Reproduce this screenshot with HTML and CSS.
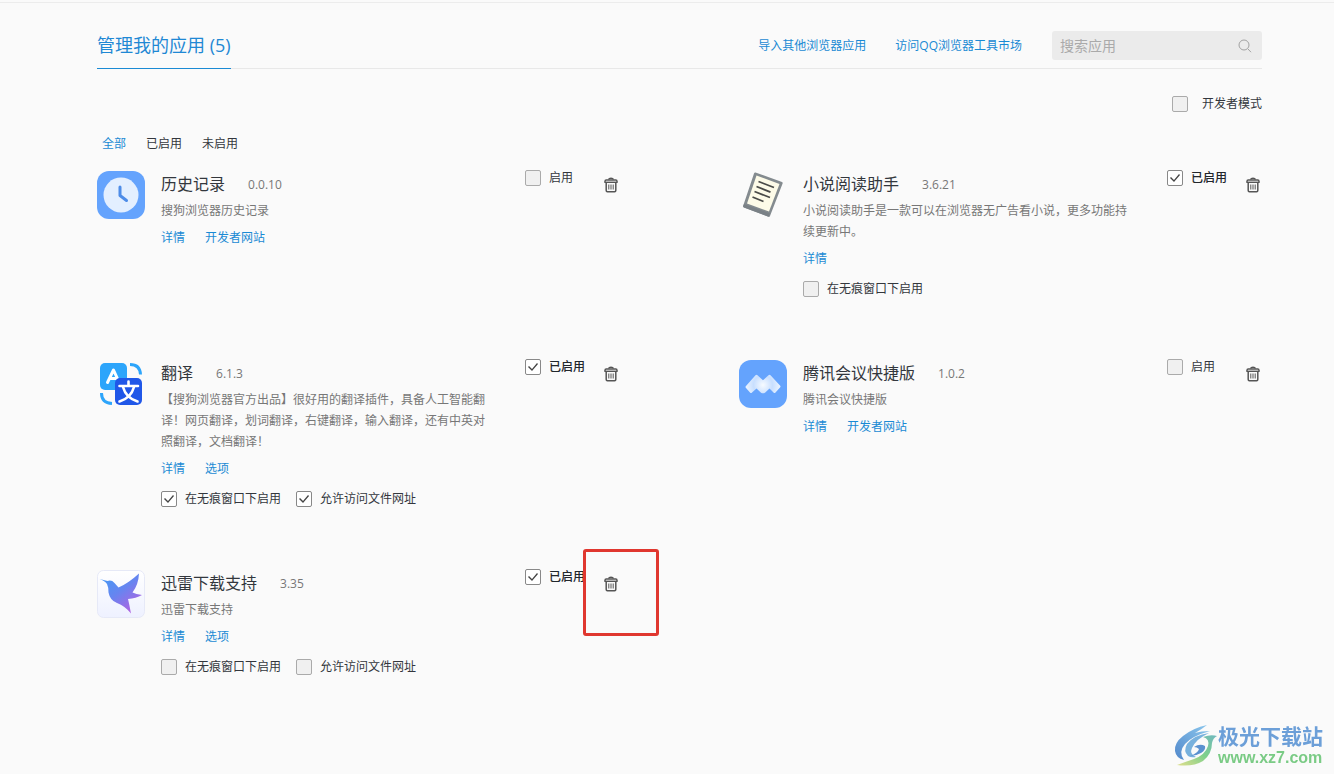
FILE: index.html
```html
<!DOCTYPE html>
<html lang="zh-CN">
<head>
<meta charset="utf-8">
<meta name="viewport" content="width=device-width, initial-scale=1">
<title>管理我的应用</title>
<link rel="stylesheet" href="styles.css">
</head>
<body>
<svg class="sprite" aria-hidden="true">
  <symbol id="trash" viewBox="0 0 14 16">
    <path d="M4.500 2.600Q5 1.300 7 1.300T9.500 2.600" fill="none" stroke="currentColor" stroke-width="1.400"/>
    <path d="M1 5.500V4.200Q1 3 2.200 3H11.800Q13 3 13 4.200V5.500" fill="none" stroke="currentColor" stroke-width="1.400"/>
    <path d="M.5 5.300H13.500" stroke="currentColor" stroke-width="1.400"/>
    <path d="M2.200 6V13.500Q2.200 14.700 3.400 14.700H10.600Q11.800 14.700 11.800 13.500V6" fill="none" stroke="currentColor" stroke-width="1.500"/>
    <path d="M4.800 7.500V12.500M7 7.500V12.500M9.200 7.500V12.500" stroke="currentColor" stroke-width="1"/>
  </symbol>
</svg>
<main class="page">
  <header class="header">
    <h1 class="title">管理我的应用 (5)</h1>
    <nav class="tools">
      <a href="#import">导入其他浏览器应用</a>
      <a href="#market">访问QQ浏览器工具市场</a>
    </nav>
    <form class="search">
      <input type="search" placeholder="搜索应用" aria-label="搜索应用">
      <button type="button" aria-label="搜索"><svg width="14" height="14" viewBox="0 0 14 14"><path d="M10 10L13 13.200" stroke="currentColor"/><circle cx="6" cy="6" r="5" fill="none" stroke="currentColor"/></svg></button>
    </form>
  </header>

  <label class="developer"><input type="checkbox">开发者模式</label>

  <nav class="filters">
    <a class="active" href="#all">全部</a>
    <a href="#enabled">已启用</a>
    <a href="#disabled">未启用</a>
  </nav>

  <section class="apps">
    <article class="app">
      <svg class="logo" viewBox="0 0 48 48">
        <rect width="48" height="48" rx="12" fill="#64a3fd"/>
        <circle cx="24" cy="24" r="17.500" fill="#e3efff"/>
        <path d="M23 16V24.500L29.500 29.500" fill="none" stroke="#4d8ce8" stroke-width="3" stroke-linecap="round" stroke-linejoin="round"/>
      </svg>
      <div class="info">
        <div class="heading"><h2>历史记录</h2><span>0.0.10</span></div>
        <p>搜狗浏览器历史记录</p>
        <div class="links"><a href="#detail">详情</a><a href="#site">开发者网站</a></div>
      </div>
      <div class="controls">
        <label><input type="checkbox">启用</label>
        <button class="remove" type="button" aria-label="删除"><svg><use href="#trash"/></svg></button>
      </div>
    </article>

    <article class="app">
      <svg class="logo" viewBox="0 0 48 48">
        <path d="M16.500 1.500L43 11Q44 11.500 43.600 12.500L31 45Q30.500 46.200 29.500 45.800L5 36.500Q3.800 36 4.200 34.800L15 2.500Q15.500 1.200 16.500 1.500Z" fill="#848b8f"/>
        <path d="M5 33L31 42.500L29.500 45.800L5 36.500Q4 36 4.200 35Z" fill="#7a8186"/>
        <path d="M17.500 4.500L40.500 13L30 40.500L8 32.500Z" fill="#fdfbe8"/>
        <path d="M19.500 10.500L35 16.500M17.500 15.500L31.500 21.200M15.500 20.500L31 26.500M13.500 26L24.500 30.500" stroke="#4a4b48" stroke-width="1.800"/>
      </svg>
      <div class="info">
        <div class="heading"><h2>小说阅读助手</h2><span>3.6.21</span></div>
        <p>小说阅读助手是一款可以在浏览器无广告看小说，更多功能持续更新中。</p>
        <div class="links"><a href="#detail">详情</a></div>
        <div class="options"><label><input type="checkbox">在无痕窗口下启用</label></div>
      </div>
      <div class="controls">
        <label class="on"><input type="checkbox" checked>已启用</label>
        <button class="remove" type="button" aria-label="删除"><svg><use href="#trash"/></svg></button>
      </div>
    </article>

    <article class="app">
      <svg class="logo" viewBox="0 0 48 48">
        <rect x="3" y="3" width="27" height="27" rx="5" fill="#2da5fb"/>
        <path d="M10.500 22.500L16.500 10L22 22M13 18.500H20" fill="none" stroke="#fff" stroke-width="3" stroke-linecap="round" stroke-linejoin="round"/>
        <path d="M33 4.500Q43 4.500 43.500 14.500M4.500 33Q4.500 43 15 43.500" fill="none" stroke="#2da5fb" stroke-width="3"/>
        <rect x="18" y="18" width="27" height="27" rx="5" fill="#2057e8"/>
        <path d="M31.500 21.500V25.500M22.500 26H41M26 27Q29 38 40.500 41.500M37 27Q34 38 22.500 41.500" fill="none" stroke="#fff" stroke-width="2.600" stroke-linecap="round"/>
      </svg>
      <div class="info">
        <div class="heading"><h2>翻译</h2><span>6.1.3</span></div>
        <p>【搜狗浏览器官方出品】很好用的翻译插件，具备人工智能翻译！网页翻译，划词翻译，右键翻译，输入翻译，还有中英对照翻译，文档翻译！</p>
        <div class="links"><a href="#detail">详情</a><a href="#options">选项</a></div>
        <div class="options">
          <label><input type="checkbox" checked>在无痕窗口下启用</label>
          <label><input type="checkbox" checked>允许访问文件网址</label>
        </div>
      </div>
      <div class="controls">
        <label class="on"><input type="checkbox" checked>已启用</label>
        <button class="remove" type="button" aria-label="删除"><svg><use href="#trash"/></svg></button>
      </div>
    </article>

    <article class="app">
      <svg class="logo" viewBox="0 0 48 48">
        <defs>
          <radialGradient id="meeting" gradientUnits="userSpaceOnUse" cx="24" cy="25" r="19"><stop stop-color="#f7fbff"/><stop offset=".5" stop-color="#c8dfff"/><stop offset="1" stop-color="#f2f8ff"/></radialGradient>
        </defs>
        <rect width="48" height="48" rx="12" fill="#64a3fd"/>
        <path d="M16.500 15.200Q17.500 14.200 18.500 15.200L24 20.200L29.500 15.200Q30.500 14.200 31.500 15.200L41 25.500Q42 26.500 41 27.500L36.500 32.500Q35.500 33.500 34.500 32.500L30.500 28.500L26 32.700Q24 34 22 32.700L17.500 28.500L13 32.500Q12 33.500 11 32.500L7 28Q6 27 7 26Z" fill="url(#meeting)"/>
      </svg>
      <div class="info">
        <div class="heading"><h2>腾讯会议快捷版</h2><span>1.0.2</span></div>
        <p>腾讯会议快捷版</p>
        <div class="links"><a href="#detail">详情</a><a href="#site">开发者网站</a></div>
      </div>
      <div class="controls">
        <label><input type="checkbox">启用</label>
        <button class="remove" type="button" aria-label="删除"><svg><use href="#trash"/></svg></button>
      </div>
    </article>

    <article class="app">
      <svg class="logo" viewBox="0 0 48 48">
        <defs>
          <linearGradient id="tile" x1="0" y1="0" x2="0" y2="1"><stop stop-color="#fff"/><stop offset="1" stop-color="#eef1ff"/></linearGradient>
          <linearGradient id="bird" x1="0" y1="0" x2=".8" y2="1"><stop stop-color="#3f9cf5"/><stop offset=".5" stop-color="#6685f0"/><stop offset="1" stop-color="#b95fe0"/></linearGradient>
        </defs>
        <rect x=".5" y=".5" width="47" height="47" rx="6" fill="url(#tile)" stroke="#e6e9f7"/>
        <path d="M2.500 9L10.500 11Q14.500 9.500 17.500 13L21.500 17.500Q31 13.500 42 3.500Q41.500 14.500 35.500 22.500Q39 24 45 25Q39 28.500 31 29Q32 33 34 43.500Q28 36 20 33Q13 30.500 11.500 22.500Q11.500 17 10 14Q8 11 2.500 9Z" fill="url(#bird)"/>
      </svg>
      <div class="info">
        <div class="heading"><h2>迅雷下载支持</h2><span>3.35</span></div>
        <p>迅雷下载支持</p>
        <div class="links"><a href="#detail">详情</a><a href="#options">选项</a></div>
        <div class="options">
          <label><input type="checkbox">在无痕窗口下启用</label>
          <label><input type="checkbox">允许访问文件网址</label>
        </div>
      </div>
      <div class="controls">
        <label class="on"><input type="checkbox" checked>已启用</label>
        <button class="remove marked" type="button" aria-label="删除"><svg><use href="#trash"/></svg></button>
      </div>
    </article>
  </section>
</main>
<aside class="watermark">
  <svg width="44" height="42" viewBox="0 0 44 42">
    <defs>
      <linearGradient id="sky" x1="1" y1="0" x2="0" y2="1"><stop stop-color="#8cc8ee"/><stop offset="1" stop-color="#5288cb"/></linearGradient>
      <linearGradient id="leaf" x1="1" y1="0" x2="0" y2="1"><stop stop-color="#6fb8c0"/><stop offset=".5" stop-color="#7fd08a"/><stop offset="1" stop-color="#e0df8d"/></linearGradient>
    </defs>
    <path d="M33 0Q19 3 9 11Q0 18 1 26Q2 33 10 35Q4 27 11 19Q18 11 36 6Q27 6 21 8Q28 4 33 0Z" fill="url(#sky)"/>
    <path d="M35 8Q20 10 13 19Q9 26 14 31Q17 33 22 32Q15 29 18 23Q22 14 35 8Z" fill="#78b1dd"/>
    <path d="M43 11Q37 9 29 12Q36 14 34 21Q31 30 20 34Q11 37 3 40Q19 42 29 36Q38 29 38 18Q39 13 43 11Z" fill="url(#leaf)"/>
    <path d="M20 22Q26 18 31 21Q32 25 27 28Q22 31 16 31Q24 28 25 24Q23 22 20 22Z" fill="#5a91d0"/>
  </svg>
  <div><strong>极光下载站</strong><span>www.xz7.com</span></div>
</aside>
</body>
</html>
```
FILE: styles.css
```css
*, ::before, ::after { box-sizing: border-box; }

body {
  margin: 0;
  min-height: 100vh;
  background: #fafafa;
  color: #33373d;
  font: 12px/21px "Open Sans", "Noto Sans CJK SC", sans-serif;
  text-spacing-trim: space-all;
}

h1, h2, p { margin: 0; font-weight: 400; }
a { color: #1a8ad4; text-decoration: none; }
button { border: 0; background: none; cursor: pointer; }
.sprite { position: absolute; width: 0; height: 0; }

.page {
  padding: 0 72px 24px 97px;
  border-top: 1px solid #ececec;
  margin-top: 2px;
}

.header {
  display: flex;
  align-items: center;
  height: 66px;
  padding-top: 20px;
  border-bottom: 1px solid #e8e8e8;
}

.title {
  align-self: stretch;
  margin-bottom: -1px;
  border-bottom: 1px solid #1a8ad4;
  color: #1f88d4;
  font-size: 18px;
  line-height: 44px;
  white-space: nowrap;
}

.tools {
  display: flex;
  gap: 29px;
  margin: 0 30px 0 auto;
}

.search {
  display: flex;
  align-items: center;
  width: 210px;
  height: 29px;
  border-radius: 3px;
  background: #ebebeb;
}

.search input {
  flex: 1;
  min-width: 0;
  padding: 0 8px;
  border: 0;
  outline: 0;
  background: none;
  color: #33373d;
  font: inherit;
  font-size: 14px;
}

.search input::placeholder { color: #aaa; }
.search button { display: flex; padding: 0 10px; color: #a2a2a2; }

label { display: flex; align-items: center; white-space: nowrap; line-height: 18px; }

input[type="checkbox"] {
  appearance: none;
  flex: none;
  width: 16px;
  height: 16px;
  margin: 0 8px 0 0;
  border: 1px solid #aaa;
  border-radius: 2px;
  background: #f0f0f0;
}

input[type="checkbox"]:checked { border-color: #888; background: #fff; }

input[type="checkbox"]:checked::before {
  content: "";
  display: block;
  width: 14px;
  height: 14px;
  background: #444;
  clip-path: polygon(2px 7px, 3px 6px, 6px 9px, 11px 3px, 12px 4px, 6px 11px);
}

.developer { width: fit-content; margin: 26px 0 0 auto; }
.developer input { margin-right: 14px; }

.filters { display: flex; gap: 20px; margin: 20px 0 0 5px; }
.filters a { color: #33373d; }
.filters .active { color: #1a8ad4; }

.apps {
  display: grid;
  grid-template-columns: repeat(2, minmax(0, 1fr));
  gap: 62px 119px;
  margin-top: 17px;
}

.app { display: flex; gap: 16px; }
.logo { flex: none; width: 48px; height: 48px; }
.info { flex: 1; min-width: 0; }
.info p { max-width: 327px; margin-top: 3px; color: #777; }

.heading { display: flex; align-items: center; gap: 23px; height: 26px; color: #777; }
.heading h2 { color: #33373d; font-size: 16px; }

.links { display: flex; gap: 20px; margin-top: 6px; }
.options { display: flex; gap: 15px; margin-top: 11px; }

.controls {
  display: flex;
  flex: none;
  align-items: flex-start;
  justify-content: space-between;
  width: 95px;
}

.controls label { margin-top: -2px; }
.controls .on { color: #22262c; font-weight: 500; }

.remove {
  display: flex;
  position: relative;
  margin-top: 6px;
  padding: 0 2px;
  color: #555;
}

.remove svg { width: 14px; height: 16px; }

.marked::after {
  content: "";
  position: absolute;
  top: -27px;
  left: -19px;
  width: 76px;
  height: 87px;
  border: 3px solid #e0372f;
  border-radius: 3px;
  pointer-events: none;
}

.watermark {
  display: flex;
  position: fixed;
  right: 11px;
  bottom: 7px;
  align-items: center;
}

.watermark div { display: flex; flex-direction: column; }
.watermark strong { color: #6c9fd8; font-size: 21px; line-height: 24px; }
.watermark span { color: #7acb85; font: bold 16px/19px "Liberation Sans", sans-serif; }
```
